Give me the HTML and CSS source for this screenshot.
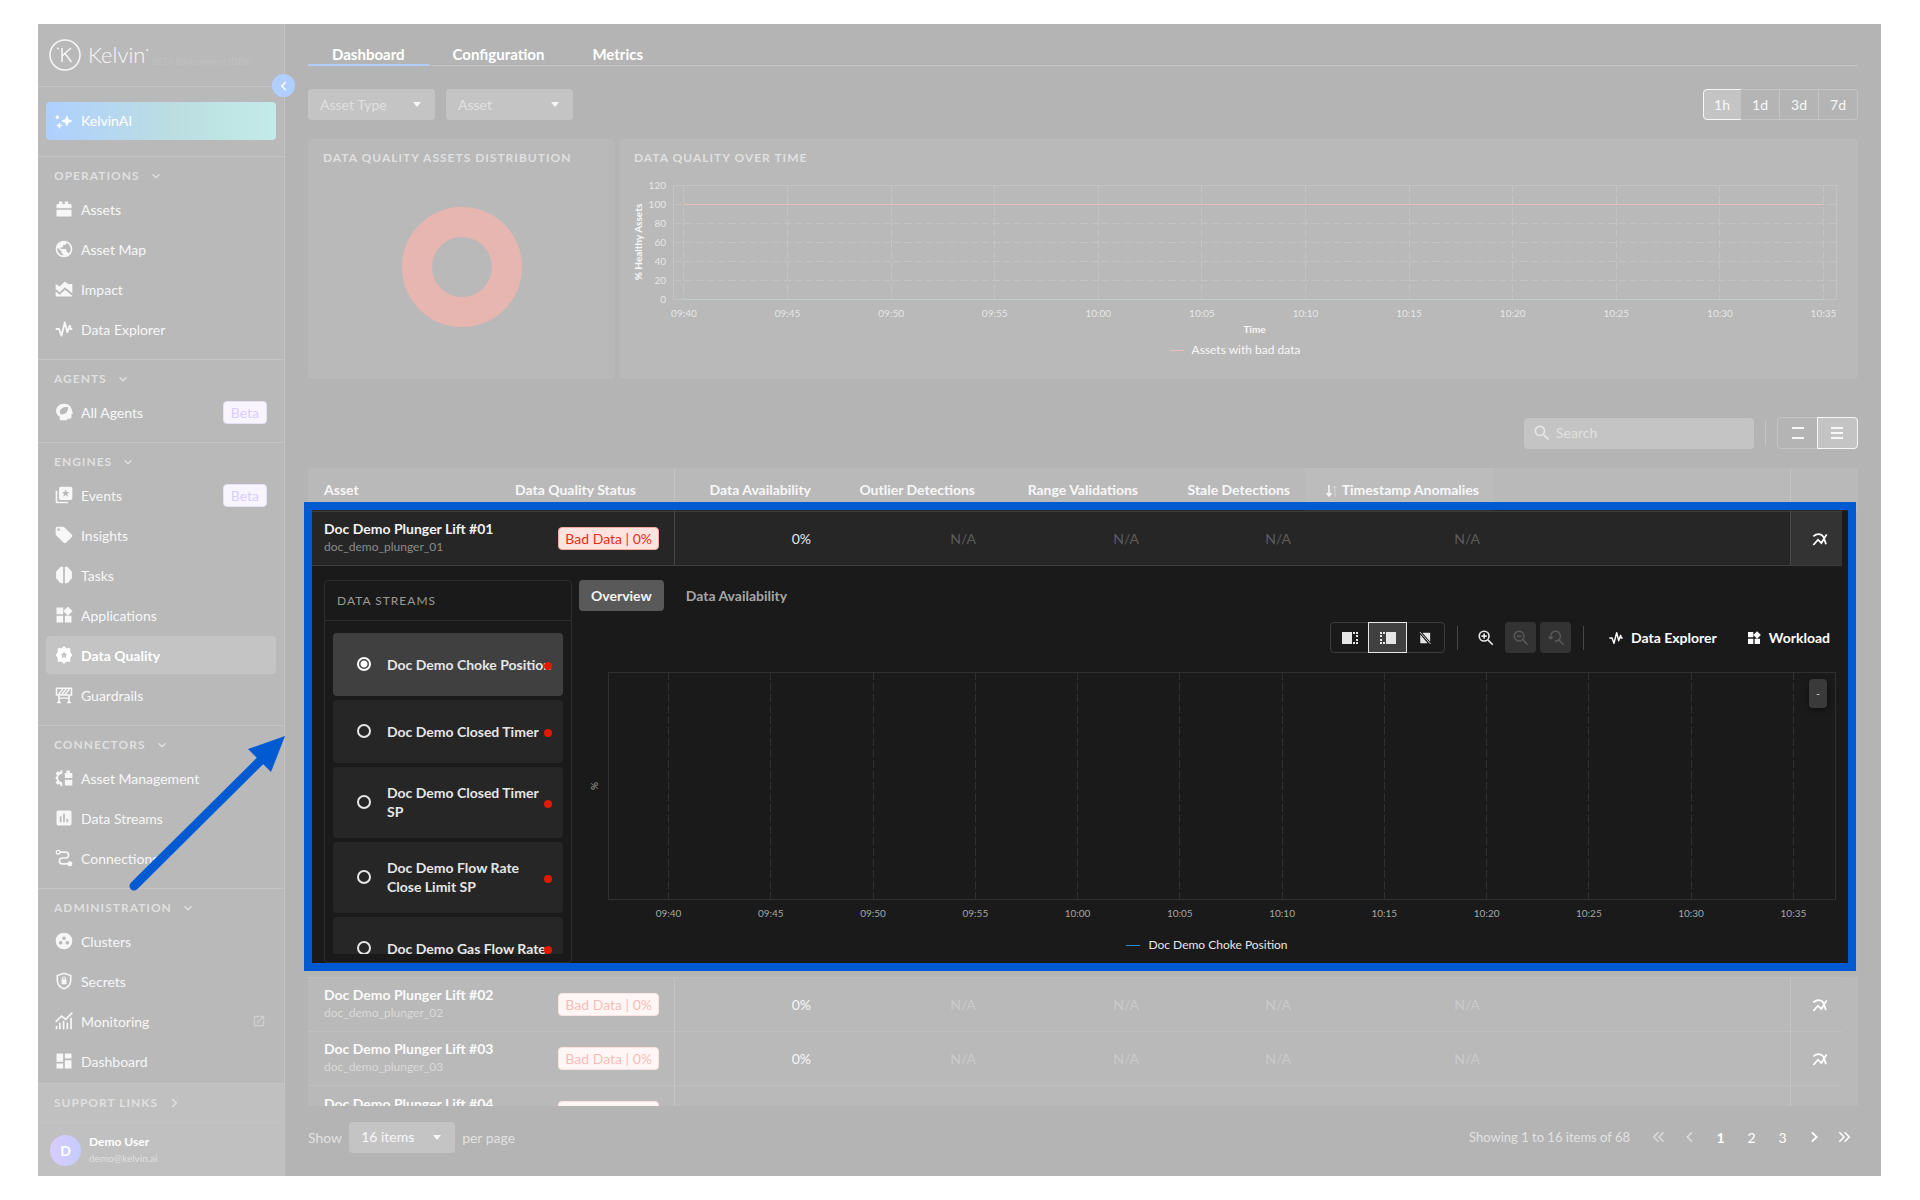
FILE: index.html
```html
<!DOCTYPE html>
<html lang="en">

<head>
    <meta charset="UTF-8">
    <meta name="viewport" content="width=device-width, initial-scale=1.0">
    <title>Kelvin - Data Quality</title>
    <link rel="stylesheet" href="styles.css">
</head>

<body>
    <!-- Icon set -->
    <svg class="sprite" aria-hidden="true">
        <symbol id="i-spark" viewBox="0 0 24 24"><path d="M15.5 5l2 5 5 2-5 2-2 5-2-5-5-2 5-2zM6.5 13.5l1.2 2.8 2.8 1.2-2.8 1.2-1.2 2.8-1.2-2.8-2.8-1.2 2.8-1.2z"/><circle cx="4" cy="7.5" r="2"/></symbol>
        <symbol id="i-assets" viewBox="0 0 24 24"><path d="M3 13h18v7a1 1 0 0 1-1 1H4a1 1 0 0 1-1-1zM4 6h2V3h4v3h3V3h4v3h3a1 1 0 0 1 1 1v4H3V7a1 1 0 0 1 1-1z"/></symbol>
        <symbol id="i-globe" viewBox="0 0 24 24"><path d="M12 2C6.48 2 2 6.48 2 12s4.48 10 10 10 10-4.48 10-10S17.52 2 12 2zm-1 17.93c-3.95-.49-7-3.85-7-7.93 0-.62.08-1.21.21-1.79L9 15v1c0 1.1.9 2 2 2v1.93zm6.9-2.54c-.26-.81-1-1.39-1.9-1.39h-1v-3c0-.55-.45-1-1-1H8v-2h2c.55 0 1-.45 1-1V7h2c1.1 0 2-.9 2-2v-.41c2.93 1.19 5 4.06 5 7.41 0 2.08-.8 3.97-2.1 5.39z"/></symbol>
        <symbol id="i-impact" viewBox="0 0 24 24"><path d="M2 6l5 3 6-6 4 3h5v11l-9-7-6 6-5-4z"/><path d="M2 15l5 4 6-6 9 7v1H2z"/></symbol>
        <symbol id="i-pulse" viewBox="0 0 24 24"><path d="M2 12h4l3 8 4-16 3 12 3-8 1 4h2" fill="none" stroke="currentColor" stroke-width="2.2" stroke-linejoin="round"/></symbol>
        <symbol id="i-agent" viewBox="0 0 24 24"><path fill-rule="evenodd" d="M12 2c5.5 0 9 3.5 9.5 8l1 3.5c0 .8-.5 1-1.5 1V18c0 1.2-.8 2-2 2h-3v2H7v-4.3C4 16 2.5 13.5 2.5 11 2.5 6 6.500 2 12 2zm5 4c-6-.5-10 2-10 6l1 3 1.5-.2C14 14.5 17 12 17 6z"/></symbol>
        <symbol id="i-events" viewBox="0 0 24 24"><path d="M2 7h2v13h13v2H4a2 2 0 0 1-2-2z"/><path fill-rule="evenodd" d="M8 2h12a2 2 0 0 1 2 2v12a2 2 0 0 1-2 2H8a2 2 0 0 1-2-2V4a2 2 0 0 1 2-2zm6 3l-1.3 3.5H9.5l2.5 2-1 3.500 3-2 3 2-1-3.5 2.5-2h-3.2z"/></symbol>
        <symbol id="i-tag" viewBox="0 0 24 24"><path d="M21.41 11.58l-9-9C12.05 2.22 11.55 2 11 2H4c-1.1 0-2 .9-2 2v7c0 .55.22 1.05.59 1.42l9 9c.36.36.86.58 1.41.58s1.05-.22 1.41-.59l7-7c.37-.36.59-.86.59-1.41s-.23-1.06-.59-1.42zM5.5 7C4.67 7 4 6.33 4 5.5S4.67 4 5.5 4 7 4.67 7 5.5 6.33 7 5.5 7z"/></symbol>
        <symbol id="i-tasks" viewBox="0 0 24 24"><path d="M11 2v20H8l-5.5-6V8L8 2zM13 2h3l5.5 6v8L16 22h-3z"/></symbol>
        <symbol id="i-apps" viewBox="0 0 24 24"><path d="M13 13v8h8v-8h-8zM3 21h8v-8H3v8zM3 3v8h8V3H3zm13.66-1.31L11 7.34 16.66 13l5.66-5.66-5.66-5.65z"/></symbol>
        <symbol id="i-quality" viewBox="0 0 24 24"><path fill-rule="evenodd" d="M12 1.5L15 4h4.5v4.5L22 12l-2.5 3.5V20H15l-3 2.5L9 20H4.5v-4.5L2 12l2.5-3.5V4H9zM12 7l-1.2 3.6H7.5l2.6 2.1-1 3.6 2.9-2.1 2.9 2.1-1-3.6 2.6-2.1h-3.3z"/></symbol>
        <symbol id="i-guard" viewBox="0 0 24 24"><path d="M3 4h18v8H3zM5 12l6-8M9 12l6-8M13 12l6-8" fill="none" stroke="currentColor" stroke-width="1.8"/><path d="M5 13h2v7h1.5v2h-5v-2H5zM17 13h2v7h1.500v2h-5v-2H17zM7 15h10v1.5H7z"/></symbol>
        <symbol id="i-manage" viewBox="0 0 24 24"><path d="M10 2v5a5 5 0 0 0 0 10v5H8l-1-3-3 1-2-3 2-2-2-2v-2l2-2-2-2 2-3 3 1 1-2zM13 14h9v7h-9zM13 6h2V3h4v3h3v6h-9z"/></symbol>
        <symbol id="i-streams" viewBox="0 0 24 24"><path d="M19 3H5c-1.1 0-2 .9-2 2v14c0 1.1.9 2 2 2h14c1.1 0 2-.9 2-2V5c0-1.1-.9-2-2-2zM9 17H7v-7h2v7zm4 0h-2V7h2v10zm4 0h-2v-4h2v4z"/></symbol>
        <symbol id="i-route" viewBox="0 0 24 24"><path d="M7 5h7a3.5 3.5 0 0 1 0 7h-4a3.5 3.5 0 0 0 0 7h7" fill="none" stroke="currentColor" stroke-width="2"/><circle cx="5" cy="5" r="2.2" fill="none" stroke="currentColor" stroke-width="1.6"/><circle cx="19" cy="19" r="3"/></symbol>
        <symbol id="i-clusters" viewBox="0 0 24 24"><path fill-rule="evenodd" d="M12 2a10 10 0 1 0 0 20 10 10 0 0 0 0-20zm0 4.5a2.2 2.2 0 1 1 0 4.4 2.2 2.2 0 0 1 0-4.4zM8 12a2.2 2.2 0 1 1 0 4.4A2.2 2.2 0 0 1 8 12zm8 0a2.2 2.2 0 1 1 0 4.4 2.2 2.2 0 0 1 0-4.4z"/></symbol>
        <symbol id="i-shield" viewBox="0 0 24 24"><path d="M12 2.8l8 2.7V11c0 4.5-3 8.5-8 10.2C7 19.5 4 15.5 4 11V5.5z" fill="none" stroke="currentColor" stroke-width="2"/><path fill-rule="evenodd" d="M9.5 10V9a2.5 2.5 0 0 1 5 0v1h.5v6H9v-6zm1.3 0h2.4V9a1.2 1.2 0 0 0-2.4 0z"/></symbol>
        <symbol id="i-monitor" viewBox="0 0 24 24"><path d="M2 13l7-7 5 4 8-8" fill="none" stroke="currentColor" stroke-width="2"/><path d="M2 18h2v4H2zM6 14h2v8H6zM10.5 12h2v10h-2zM15 14h2v8h-2zM19.5 8h2v14h-2z"/></symbol>
        <symbol id="i-dash" viewBox="0 0 24 24"><path d="M3 13h8V3H3v10zm0 8h8v-6H3v6zm10 0h8V11h-8v10zm0-18v6h8V3h-8z"/></symbol>
        <symbol id="i-open" viewBox="0 0 24 24"><path d="M19 19H5V5h7V3H5a2 2 0 0 0-2 2v14a2 2 0 0 0 2 2h14c1.1 0 2-.9 2-2v-7h-2v7zM14 3v2h3.59l-9.83 9.83 1.41 1.41L19 6.41V10h2V3h-7z"/></symbol>
        <symbol id="i-down" viewBox="0 0 24 24"><path d="M5 8.5l7 7 7-7" fill="none" stroke="currentColor" stroke-width="3"/></symbol>
        <symbol id="i-right" viewBox="0 0 24 24"><path d="M8.5 4l8 8-8 8" fill="none" stroke="currentColor" stroke-width="3"/></symbol>
        <symbol id="i-left" viewBox="0 0 24 24"><path d="M15.5 4l-8 8 8 8" fill="none" stroke="currentColor" stroke-width="3"/></symbol>
        <symbol id="i-first" viewBox="0 0 24 24"><path d="M11 4l-8 8 8 8M20 4l-8 8 8 8" fill="none" stroke="currentColor" stroke-width="2.6"/></symbol>
        <symbol id="i-last" viewBox="0 0 24 24"><path d="M4 4l8 8-8 8M13 4l8 8-8 8" fill="none" stroke="currentColor" stroke-width="2.6"/></symbol>
        <symbol id="i-caret" viewBox="0 0 10 6"><path d="M1 0h8L5 5z"/></symbol>
        <symbol id="i-search" viewBox="0 0 24 24"><path d="M15.5 14h-.79l-.28-.27A6.471 6.471 0 0 0 16 9.5 6.5 6.5 0 1 0 9.5 16c1.61 0 3.09-.59 4.23-1.57l.27.28v.79l5 4.99L20.49 19l-4.99-5zm-6 0C7.01 14 5 11.99 5 9.5S7.01 5 9.5 5 14 7.01 14 9.5 11.99 14 9.5 14z"/></symbol>
        <symbol id="i-zoomin" viewBox="0 0 24 24"><path d="M14.5 14.5L21 21M9.5 6v7M6 9.5h7" stroke="currentColor" stroke-width="2.2"/><circle cx="9.5" cy="9.5" r="6.5" fill="none" stroke="currentColor" stroke-width="2.2"/></symbol>
        <symbol id="i-zoomout" viewBox="0 0 24 24"><path d="M14.5 14.5L21 21M6.500 9.5h6" stroke="currentColor" stroke-width="2"/><circle cx="9.5" cy="9.5" r="6.5" fill="none" stroke="currentColor" stroke-width="2"/></symbol>
        <symbol id="i-zoomreset" viewBox="0 0 24 24"><path d="M15.5 14.5L22 21M5 11a6.5 6.5 0 1 1 5.5 5" fill="none" stroke="currentColor" stroke-width="2"/><path d="M1 10h8l-4 4.5z"/></symbol>
        <symbol id="i-multi" viewBox="0 0 24 24"><path d="M2 21l7-8 5 5 8-13M2 8c6-5 15-5 17 6l2 6" fill="none" stroke="currentColor" stroke-width="2.6"/></symbol>
        <symbol id="i-sort" viewBox="0 0 12 14"><path d="M3 1v10M.5 9L3 12l2.5-3" fill="none" stroke="currentColor" stroke-width="1.5"/><path d="M9 13V3M7 4.5L9 2l2 2.5" fill="none" stroke="currentColor" opacity=".4"/></symbol>
        <symbol id="i-solid-left" viewBox="0 0 16 12"><path d="M0 0h10v12H0zM11 0h2v2h-2zM14 0h2v2h-2zM14 3h2v2h-2zM14 7h2v2h-2zM14 10h2v2h-2zM11 10h2v2h-2z"/></symbol>
        <symbol id="i-solid-right" viewBox="0 0 16 12"><path d="M6 0h10v12H6zM0 0h2v2H0zM3 0h2v2H3zM0 3h2v2H0zM0 7h2v2H0zM0 10h2v2H0zM3 10h2v2H3z"/></symbol>
        <symbol id="i-none" viewBox="0 0 14 14"><path d="M4 1h9v10.500zM1.500 3L10 13H1.500z"/><path d="M1 0l12.500 14" stroke="currentColor"/></symbol>
    </svg>

    <div class="app">
        <aside class="sidebar">
            <div class="brand">
                <svg class="brand-mark" viewBox="0 0 32 32" aria-hidden="true">
                    <circle cx="16" cy="16" r="15" fill="none" stroke="currentColor" stroke-width="1.5"/>
                    <path d="M13 9v14M22 9l-9 8M16 14.5l6.5 8.5" fill="none" stroke="currentColor" stroke-width="1.5"/>
                    <circle cx="9" cy="9.5" r="1"/>
                </svg>
                <span class="brand-name">Kelvin<sup>•</sup></span>
                <span class="brand-env">BETA Environment (DEV)</span>
                <button class="collapse" type="button" aria-label="Collapse menu"><svg><use href="#i-left"/></svg></button>
            </div>

            <div class="ai">
                <a class="nav-link ai-link" href="#"><svg><use href="#i-spark"/></svg>KelvinAI</a>
            </div>

            <nav class="menu">
                <section class="group">
                    <h2>Operations <svg><use href="#i-down"/></svg></h2>
                    <a class="nav-link" href="#"><svg><use href="#i-assets"/></svg>Assets</a>
                    <a class="nav-link" href="#"><svg><use href="#i-globe"/></svg>Asset Map</a>
                    <a class="nav-link" href="#"><svg><use href="#i-impact"/></svg>Impact</a>
                    <a class="nav-link" href="#"><svg><use href="#i-pulse"/></svg>Data Explorer</a>
                </section>
                <section class="group">
                    <h2>Agents <svg><use href="#i-down"/></svg></h2>
                    <a class="nav-link" href="#"><svg><use href="#i-agent"/></svg>All Agents <span class="beta">Beta</span></a>
                </section>
                <section class="group">
                    <h2>Engines <svg><use href="#i-down"/></svg></h2>
                    <a class="nav-link" href="#"><svg><use href="#i-events"/></svg>Events <span class="beta">Beta</span></a>
                    <a class="nav-link" href="#"><svg><use href="#i-tag"/></svg>Insights</a>
                    <a class="nav-link" href="#"><svg><use href="#i-tasks"/></svg>Tasks</a>
                    <a class="nav-link" href="#"><svg><use href="#i-apps"/></svg>Applications</a>
                    <a class="nav-link active" href="#"><svg><use href="#i-quality"/></svg>Data Quality</a>
                    <a class="nav-link" href="#"><svg><use href="#i-guard"/></svg>Guardrails</a>
                </section>
                <section class="group">
                    <h2>Connectors <svg><use href="#i-down"/></svg></h2>
                    <a class="nav-link" href="#"><svg><use href="#i-manage"/></svg>Asset Management</a>
                    <a class="nav-link" href="#"><svg><use href="#i-streams"/></svg>Data Streams</a>
                    <a class="nav-link" href="#"><svg><use href="#i-route"/></svg>Connections</a>
                </section>
                <section class="group">
                    <h2>Administration <svg><use href="#i-down"/></svg></h2>
                    <a class="nav-link" href="#"><svg><use href="#i-clusters"/></svg>Clusters</a>
                    <a class="nav-link" href="#"><svg><use href="#i-shield"/></svg>Secrets</a>
                    <a class="nav-link" href="#"><svg><use href="#i-monitor"/></svg>Monitoring <svg class="external"><use href="#i-open"/></svg></a>
                    <a class="nav-link" href="#"><svg><use href="#i-dash"/></svg>Dashboard</a>
                </section>
            </nav>

            <div class="sidebar-foot">
                <h2>Support Links <svg><use href="#i-right"/></svg></h2>
                <div class="user">
                    <span class="avatar">D</span>
                    <div>
                        <div class="user-name">Demo User</div>
                        <div class="user-mail">demo@kelvin.ai</div>
                    </div>
                </div>
            </div>
        </aside>

        <main class="main">
            <nav class="tabs">
                <a class="tab selected" href="#">Dashboard</a>
                <a class="tab" href="#">Configuration</a>
                <a class="tab" href="#">Metrics</a>
            </nav>

            <div class="filters">
                <div class="select">
                    <select aria-label="Asset Type"><option>Asset Type</option></select>
                    <svg><use href="#i-caret"/></svg>
                </div>
                <div class="select">
                    <select aria-label="Asset"><option>Asset</option></select>
                    <svg><use href="#i-caret"/></svg>
                </div>
                <div class="segmented range">
                    <button class="on" type="button">1h</button>
                    <button type="button">1d</button>
                    <button type="button">3d</button>
                    <button type="button">7d</button>
                </div>
            </div>

            <div class="cards">
                <section class="card card-assets">
                    <h3>Data Quality Assets Distribution</h3>
                    <svg class="donut" viewBox="0 0 122 122" aria-label="All assets have bad data">
                        <circle cx="61" cy="61" r="45" fill="none" stroke-width="30"/>
                    </svg>
                </section>
                <section class="card">
                    <h3>Data Quality Over Time</h3>
                    <svg class="plot plot-health">
                        <g class="grid">
                            <rect width="100%" height="114"/>
                            <g class="dash">
                                <line x2="100%" y1="19" y2="19"/>
                                <line x2="100%" y1="38" y2="38"/>
                                <line x2="100%" y1="57" y2="57"/>
                                <line x2="100%" y1="76" y2="76"/>
                                <line x2="100%" y1="95" y2="95"/>
                                <line x1="0.94%" x2="0.94%" y2="114"/>
                                <line x1="9.85%" x2="9.85%" y2="114"/>
                                <line x1="18.76%" x2="18.76%" y2="114"/>
                                <line x1="27.66%" x2="27.66%" y2="114"/>
                                <line x1="36.57%" x2="36.57%" y2="114"/>
                                <line x1="45.48%" x2="45.48%" y2="114"/>
                                <line x1="54.39%" x2="54.39%" y2="114"/>
                                <line x1="63.29%" x2="63.29%" y2="114"/>
                                <line x1="72.2%" x2="72.2%" y2="114"/>
                                <line x1="81.11%" x2="81.11%" y2="114"/>
                                <line x1="90.02%" x2="90.02%" y2="114"/>
                                <line x1="98.92%" x2="98.92%" y2="114"/>
                            </g>
                        </g>
                        <line class="series-bad" x1="0.94%" x2="98.92%" y1="19" y2="19"/>
                        <line class="series-good" x1="0.94%" x2="98.92%" y1="114" y2="114"/>
                        <g class="y-labels">
                            <text x="-7" y="4">120</text>
                            <text x="-7" y="23">100</text>
                            <text x="-7" y="42">80</text>
                            <text x="-7" y="61">60</text>
                            <text x="-7" y="80">40</text>
                            <text x="-7" y="99">20</text>
                            <text x="-7" y="118">0</text>
                        </g>
                        <g class="x-labels">
                            <text x="0.94%" y="132">09:40</text>
                            <text x="9.85%" y="132">09:45</text>
                            <text x="18.76%" y="132">09:50</text>
                            <text x="27.66%" y="132">09:55</text>
                            <text x="36.57%" y="132">10:00</text>
                            <text x="45.48%" y="132">10:05</text>
                            <text x="54.39%" y="132">10:10</text>
                            <text x="63.29%" y="132">10:15</text>
                            <text x="72.2%" y="132">10:20</text>
                            <text x="81.11%" y="132">10:25</text>
                            <text x="90.02%" y="132">10:30</text>
                            <text x="98.92%" y="132">10:35</text>
                        </g>
                        <text class="axis-title" x="50%" y="148">Time</text>
                        <text class="axis-title" transform="translate(-31 57) rotate(-90)">% Healthy Assets</text>
                    </svg>
                    <div class="legend"><span class="key bad"></span>Assets with bad data</div>
                </section>
            </div>

            <div class="tools">
                <label class="search">
                    <svg><use href="#i-search"/></svg>
                    <input type="text" placeholder="Search" aria-label="Search">
                </label>
                <span class="divider"></span>
                <div class="segmented density">
                    <button type="button" aria-label="Comfortable rows"><svg viewBox="0 0 12 12"><path d="M0 0h12v2H0zM0 10h12v2H0z"/></svg></button>
                    <button class="on" type="button" aria-label="Compact rows"><svg viewBox="0 0 12 12"><path d="M0 0h12v2H0zM0 5h12v2H0zM0 10h12v2H0z"/></svg></button>
                </div>
            </div>

            <div class="grid-area">
                <div class="grid-scroll">
                    <table class="assets">
                        <colgroup>
                            <col class="c-asset"><col class="c-status"><col class="c-avail"><col class="c-outlier">
                            <col class="c-range"><col class="c-stale"><col class="c-time"><col><col class="c-action">
                        </colgroup>
                        <thead>
                            <tr>
                                <th class="left">Asset</th>
                                <th class="status">Data Quality Status</th>
                                <th class="line">Data Availability</th>
                                <th>Outlier Detections</th>
                                <th>Range Validations</th>
                                <th>Stale Detections</th>
                                <th class="sorted"><svg><use href="#i-sort"/></svg>Timestamp Anomalies</th>
                                <th></th>
                                <th class="line"></th>
                            </tr>
                        </thead>
                        <tbody>
                            <tr class="row open">
                                <td class="left"><div class="asset-name">Doc Demo Plunger Lift #01</div><div class="asset-id">doc_demo_plunger_01</div></td>
                                <td><span class="badge">Bad Data | 0%</span></td>
                                <td class="line">0%</td>
                                <td class="na">N/A</td>
                                <td class="na">N/A</td>
                                <td class="na">N/A</td>
                                <td class="na">N/A</td>
                                <td></td>
                                <td class="line action"><button type="button" aria-label="Hide charts"><svg><use href="#i-multi"/></svg></button></td>
                            </tr>
                            <tr class="detail">
                                <td colspan="9">
                                    <div class="detail-body">
                                        <section class="streams">
                                            <h4>Data Streams</h4>
                                            <div class="stream-list">
                                                <label class="stream checked"><input type="radio" name="stream" checked><span>Doc Demo Choke Position</span><i class="dot"></i></label>
                                                <label class="stream"><input type="radio" name="stream"><span>Doc Demo Closed Timer</span><i class="dot"></i></label>
                                                <label class="stream"><input type="radio" name="stream"><span>Doc Demo Closed Timer SP</span><i class="dot"></i></label>
                                                <label class="stream"><input type="radio" name="stream"><span>Doc Demo Flow Rate Close Limit SP</span><i class="dot"></i></label>
                                                <label class="stream"><input type="radio" name="stream"><span>Doc Demo Gas Flow Rate</span><i class="dot"></i></label>
                                            </div>
                                        </section>
                                        <section class="stream-view">
                                            <div class="view-tabs">
                                                <button class="on" type="button">Overview</button>
                                                <button type="button">Data Availability</button>
                                            </div>
                                            <div class="chart-tools">
                                                <div class="segmented modes">
                                                    <button type="button" aria-label="Left"><svg><use href="#i-solid-left"/></svg></button>
                                                    <button class="on" type="button" aria-label="Right"><svg><use href="#i-solid-right"/></svg></button>
                                                    <button type="button" aria-label="None"><svg><use href="#i-none"/></svg></button>
                                                </div>
                                                <span class="divider"></span>
                                                <div class="zooms">
                                                    <button type="button" aria-label="Zoom in"><svg><use href="#i-zoomin"/></svg></button>
                                                    <button type="button" aria-label="Zoom out" disabled><svg><use href="#i-zoomout"/></svg></button>
                                                    <button type="button" aria-label="Reset zoom" disabled><svg><use href="#i-zoomreset"/></svg></button>
                                                </div>
                                                <span class="divider"></span>
                                                <a class="tool-link" href="#"><svg><use href="#i-pulse"/></svg>Data Explorer</a>
                                                <a class="tool-link" href="#"><svg><use href="#i-apps"/></svg>Workload</a>
                                            </div>
                                            <div class="stream-chart">
                                                <svg class="plot plot-stream">
                                                    <g class="grid">
                                                        <rect width="100%" height="227"/>
                                                        <g class="dash">
                                                            <line x1="4.93%" x2="4.93%" y2="227"/>
                                                            <line x1="13.27%" x2="13.27%" y2="227"/>
                                                            <line x1="21.6%" x2="21.6%" y2="227"/>
                                                            <line x1="29.94%" x2="29.94%" y2="227"/>
                                                            <line x1="38.27%" x2="38.27%" y2="227"/>
                                                            <line x1="46.6%" x2="46.6%" y2="227"/>
                                                            <line x1="54.94%" x2="54.94%" y2="227"/>
                                                            <line x1="63.27%" x2="63.27%" y2="227"/>
                                                            <line x1="71.61%" x2="71.61%" y2="227"/>
                                                            <line x1="79.94%" x2="79.94%" y2="227"/>
                                                            <line x1="88.27%" x2="88.27%" y2="227"/>
                                                            <line x1="96.61%" x2="96.61%" y2="227"/>
                                                        </g>
                                                    </g>
                                                    <g class="x-labels">
                                                        <text x="4.93%" y="245">09:40</text>
                                                        <text x="13.27%" y="245">09:45</text>
                                                        <text x="21.6%" y="245">09:50</text>
                                                        <text x="29.94%" y="245">09:55</text>
                                                        <text x="38.27%" y="245">10:00</text>
                                                        <text x="46.6%" y="245">10:05</text>
                                                        <text x="54.94%" y="245">10:10</text>
                                                        <text x="63.27%" y="245">10:15</text>
                                                        <text x="71.61%" y="245">10:20</text>
                                                        <text x="79.94%" y="245">10:25</text>
                                                        <text x="88.27%" y="245">10:30</text>
                                                        <text x="96.61%" y="245">10:35</text>
                                                    </g>
                                                    <text class="unit" transform="translate(-10 118) rotate(-90)">%</text>
                                                </svg>
                                                <span class="chart-value">-</span>
                                            </div>
                                            <div class="legend"><span class="key stream-key"></span>Doc Demo Choke Position</div>
                                        </section>
                                    </div>
                                </td>
                            </tr>
                            <tr class="row">
                                <td class="left"><div class="asset-name">Doc Demo Plunger Lift #02</div><div class="asset-id">doc_demo_plunger_02</div></td>
                                <td><span class="badge">Bad Data | 0%</span></td>
                                <td class="line">0%</td>
                                <td class="na">N/A</td>
                                <td class="na">N/A</td>
                                <td class="na">N/A</td>
                                <td class="na">N/A</td>
                                <td></td>
                                <td class="line action"><button type="button" aria-label="Show charts"><svg><use href="#i-multi"/></svg></button></td>
                            </tr>
                            <tr class="row">
                                <td class="left"><div class="asset-name">Doc Demo Plunger Lift #03</div><div class="asset-id">doc_demo_plunger_03</div></td>
                                <td><span class="badge">Bad Data | 0%</span></td>
                                <td class="line">0%</td>
                                <td class="na">N/A</td>
                                <td class="na">N/A</td>
                                <td class="na">N/A</td>
                                <td class="na">N/A</td>
                                <td></td>
                                <td class="line action"><button type="button" aria-label="Show charts"><svg><use href="#i-multi"/></svg></button></td>
                            </tr>
                            <tr class="row">
                                <td class="left"><div class="asset-name">Doc Demo Plunger Lift #04</div></td>
                                <td><span class="badge">Bad Data | 0%</span></td>
                                <td class="line"></td>
                                <td></td>
                                <td></td>
                                <td></td>
                                <td></td>
                                <td></td>
                                <td class="line"></td>
                            </tr>
                        </tbody>
                    </table>
                </div>
                <!-- Highlight: frames the open row and washes out everything else -->
                <div class="spotlight"></div>
            </div>

            <footer class="pager">
                <label for="pageSize">Show</label>
                <div class="select page-size">
                    <select id="pageSize"><option>16 items</option></select>
                    <svg><use href="#i-caret"/></svg>
                </div>
                <span>per page</span>
                <span class="summary">Showing 1 to 16 items of 68</span>
                <div class="pages">
                    <button type="button" aria-label="First page" disabled><svg><use href="#i-first"/></svg></button>
                    <button type="button" aria-label="Previous page" disabled><svg><use href="#i-left"/></svg></button>
                    <button class="current" type="button">1</button>
                    <button type="button">2</button>
                    <button type="button">3</button>
                    <button type="button" aria-label="Next page"><svg><use href="#i-right"/></svg></button>
                    <button type="button" aria-label="Last page"><svg><use href="#i-last"/></svg></button>
                </div>
            </footer>
        </main>

        <!-- Arrow that points at the highlight -->
        <svg class="arrow" viewBox="0 0 160 162" aria-hidden="true">
            <path d="M8 154L136 27" stroke="currentColor" stroke-width="9" stroke-linecap="round"/>
            <path d="M159 4l-14 36-23-23z"/>
        </svg>
    </div>
</body>

</html>
```

FILE: styles.css
```css
* {
    box-sizing: border-box;
}

body {
    margin: 0;
    padding: 24px 39px 24px 38px;
    background-color: #fff;
    color: #e6e6e6;
    font-family: Lato, "Open Sans", sans-serif;
    font-size: 14px;
}

h2, h3, h4 {
    margin: 0;
}

a {
    color: inherit;
    text-decoration: none;
}

button, input, select {
    font: inherit;
    color: inherit;
    border: none;
    background: none;
    padding: 0;
    margin: 0;
}

svg {
    fill: currentColor;
    flex: none;
}

.sprite {
    position: absolute;
    width: 0;
    height: 0;
}

.app {
    position: relative;
    display: flex;
    height: calc(100vh - 48px);
    overflow: hidden;
    background-color: #181818;
}

/* Sidebar */
.sidebar {
    display: flex;
    flex-direction: column;
    width: 247px;
    flex: none;
    background-color: #262626;
    border-right: 1px solid #474747;
}

.brand {
    position: relative;
    display: flex;
    align-items: center;
    height: 62px;
    padding-left: 11px;
    flex: none;
}

.brand-mark {
    width: 32px;
    height: 32px;
}

.brand-name {
    margin-left: 7px;
    font-size: 22px;
    font-weight: 300;
    line-height: 32px;
}

.brand-name sup {
    font-size: 6px;
    line-height: 6px;
    vertical-align: 11px;
}

.brand-env {
    margin-left: 3px;
    padding-top: 12px;
    font-size: 9px;
    color: #404040;
    white-space: nowrap;
}

.collapse {
    position: absolute;
    right: -11px;
    bottom: -11px;
    display: flex;
    align-items: center;
    justify-content: center;
    width: 23px;
    height: 23px;
    border-radius: 50%;
    background-color: #0b6bff;
    color: #fff;
}

.collapse svg {
    width: 12px;
    height: 12px;
}

.ai {
    padding: 15px 8px 16px;
    border-top: 1px solid #474747;
}

.nav-link {
    display: flex;
    align-items: center;
    height: 38px;
    margin-bottom: 2px;
    padding: 0 9px 0 8px;
    border-radius: 4px;
}

.nav-link svg {
    width: 20px;
    height: 20px;
    margin-right: 7px;
}

.nav-link.active {
    background-color: #474747;
    color: #fff;
    font-weight: 700;
}

.ai-link {
    margin-bottom: 0;
    padding-bottom: 1px;
    background: linear-gradient(90deg, #086dff, #2e98a0 55%, #44c0b7);
    color: #fff;
}

.nav-link .external {
    width: 14px;
    height: 14px;
    margin: 0 1px 0 auto;
    color: #707070;
}

.menu {
    flex: 1;
    min-height: 0;
    overflow: hidden;
}

.group {
    padding: 4px 8px 9px;
    border-top: 1px solid #474747;
}

.sidebar h2 {
    display: flex;
    align-items: center;
    gap: 10px;
    height: 29px;
    padding-left: 8px;
    font-size: 12px;
    font-weight: 700;
    letter-spacing: 1px;
    text-transform: uppercase;
    color: #a0a0a0;
}

.sidebar h2 svg {
    width: 12px;
    height: 12px;
}

.beta {
    margin-left: auto;
    padding: 0 7px;
    border: 1px solid #b3a1e6;
    border-radius: 4px;
    background-color: #e9e0ff;
    color: #8860ff;
    line-height: 21px;
}

.sidebar-foot {
    flex: none;
    border-top: 1px solid #474747;
    background-color: #3b3b3b;
}

.sidebar-foot h2 {
    height: 38px;
    padding: 0 0 1px 16px;
}

.user {
    display: flex;
    align-items: center;
    gap: 8px;
    height: 54px;
    padding: 1px 0 0 12px;
    border-top: 1px solid #474747;
}

.avatar {
    width: 31px;
    height: 31px;
    border-radius: 50%;
    background: linear-gradient(90deg, #8860ff, #4a60ff);
    color: #fff;
    font-weight: 700;
    line-height: 31px;
    text-align: center;
}

.user-name {
    color: #fff;
    font-size: 12px;
    font-weight: 700;
    line-height: 16px;
}

.user-mail {
    color: #a0a0a0;
    font-size: 10px;
    line-height: 16px;
}

/* Main column */
.main {
    display: flex;
    flex-direction: column;
    flex: 1;
    min-width: 0;
    padding: 0 23px;
}

.tabs {
    display: flex;
    height: 42px;
    flex: none;
    padding-top: 19px;
    border-bottom: 1px solid #474747;
    color: #fff;
    font-size: 15px;
    font-weight: 700;
    line-height: 22px;
}

.tab {
    height: 23px;
    padding: 0 24px;
}

.tab.selected {
    border-bottom: 2px solid #0b6bff;
}

.filters {
    display: flex;
    gap: 11px;
    margin-top: 23px;
}

.select {
    position: relative;
    width: 127px;
    height: 31px;
    border-radius: 4px;
    background-color: #4a4a4a;
    color: #a0a0a0;
}

.select select {
    width: 100%;
    height: 31px;
    padding: 0 12px 1px;
    appearance: none;
}

.select svg {
    position: absolute;
    top: 13px;
    right: 13px;
    width: 10px;
    height: 6px;
    color: #e6e6e6;
    pointer-events: none;
}

.segmented {
    display: flex;
    border: 1px solid #474747;
    border-radius: 4px;
}

.segmented button {
    display: flex;
    align-items: center;
    justify-content: center;
    border-left: 1px solid #474747;
}

.segmented button:first-child {
    border-left: none;
}

.segmented .on {
    margin: -1px;
    border: 1px solid #e6e6e6;
    background-color: #4a4a4a;
}

.segmented .on:first-child {
    border: 1px solid #e6e6e6;
    border-radius: 4px 0 0 4px;
}

.segmented .on:last-child {
    border-radius: 0 4px 4px 0;
}

.range {
    width: 155px;
    height: 31px;
    margin-left: auto;
}

.range button {
    flex: 1;
    padding-bottom: 1px;
}

.range .on {
    flex: none;
    width: 38px;
}

.cards {
    display: grid;
    grid-template-columns: 307px 1fr;
    gap: 4px;
    margin-top: 19px;
}

.card {
    height: 240px;
    padding: 9px 22px 0 15px;
    border-radius: 4px;
    background-color: #262626;
}

.card-assets {
    padding-right: 15px;
}

.card h3 {
    color: #a0a0a0;
    font-size: 12px;
    font-weight: 700;
    letter-spacing: 1px;
    line-height: 20px;
    text-transform: uppercase;
    white-space: nowrap;
}

.donut {
    display: block;
    width: 122px;
    height: 122px;
    margin: 38px auto 0;
    stroke: #b91d0a;
}

.plot {
    display: block;
    overflow: visible;
    font-size: 10px;
}

.plot-health {
    width: calc(100% - 39px);
    height: 115px;
    margin: 17px 0 40px 39px;
}

.grid rect,
.grid line {
    fill: none;
    stroke: #454545;
    shape-rendering: crispEdges;
}

.dash {
    stroke-dasharray: 8 3;
}

.series-bad {
    stroke: #c0341c;
    shape-rendering: crispEdges;
}

.series-good {
    stroke: #2f6a60;
    shape-rendering: crispEdges;
}

.y-labels {
    fill: #b8b8b8;
    text-anchor: end;
}

.x-labels {
    fill: #b8b8b8;
    text-anchor: middle;
}

.axis-title {
    fill: #e6e6e6;
    font-weight: 700;
    text-anchor: middle;
}

.legend {
    display: flex;
    align-items: center;
    justify-content: center;
    gap: 8px;
    font-size: 12px;
    line-height: 20px;
}

.key {
    width: 14px;
    height: 1px;
}

.key.bad {
    background-color: #c0341c;
}

.tools {
    display: flex;
    align-items: center;
    gap: 11px;
    justify-content: flex-end;
    margin-top: 38px;
}

.search {
    display: flex;
    align-items: center;
    gap: 4px;
    width: 230px;
    height: 31px;
    padding-left: 8px;
    border-radius: 4px;
    background-color: #4a4a4a;
    color: #b0b0b0;
}

.search svg {
    width: 20px;
    height: 20px;
}

.search input {
    flex: 1;
    min-width: 0;
    padding-bottom: 1px;
    outline: none;
}

.search input::placeholder {
    color: #a0a0a0;
}

.divider {
    width: 1px;
    height: 24px;
    background-color: #474747;
}

.density {
    width: 81px;
    height: 32px;
}

.density button {
    flex: 1;
}

.density svg {
    width: 12px;
    height: 12px;
}

/* Asset table */
.grid-area {
    position: relative;
    flex: 1;
    min-height: 0;
    margin-top: 19px;
}

.grid-scroll {
    height: 100%;
    padding-right: 16px;
    overflow: hidden;
    background-color: #1b1b1b;
}

.assets {
    width: 100%;
    table-layout: fixed;
    border-spacing: 0;
    text-align: right;
}

.c-asset { width: 187px; }
.c-status { width: 179px; }
.c-avail { width: 152px; }
.c-outlier { width: 164px; }
.c-range { width: 163px; }
.c-stale { width: 152px; }
.c-time { width: 189px; }
.c-action { width: 52px; }

.assets th,
.row td {
    padding: 0 15px;
    background-color: #262626;
    white-space: nowrap;
}

.assets th {
    height: 43px;
    font-weight: 700;
}

.row td {
    height: 54px;
    padding-bottom: 1px;
    border-top: 1px solid #3d3d3d;
}

.row .na {
    padding-right: 14px;
    color: #5c5c5c;
}

.assets .left {
    padding-left: 16px;
    text-align: left;
}

.assets .status {
    padding-right: 38px;
}

.assets .line {
    border-left: 1px solid #474747;
}

.assets .sorted {
    background-color: #303030;
}

.sorted svg {
    width: 12px;
    height: 14px;
    margin-right: 4px;
    vertical-align: -3px;
}

/* fill the scrollbar gutter */
.assets th:last-child,
.row:not(.open) td:last-child {
    box-shadow: 16px 0 0 #262626;
}

.asset-name {
    color: #f2f2f2;
    font-weight: 700;
    line-height: 18px;
}

.asset-id {
    color: #8c8c8c;
    font-size: 12px;
    line-height: 18px;
}

.row:last-child td {
    vertical-align: top;
    padding-top: 9px;
}

.row:last-child .badge {
    margin-top: 6px;
}

.badge {
    display: inline-block;
    padding: 0 6px;
    border: 1px solid #f2a99e;
    border-radius: 4px;
    background-color: #ffe3df;
    color: #e62e17;
    line-height: 21px;
}

.row .action {
    padding: 0 0 0 20px;
    text-align: left;
}

.open .action {
    background-color: #333;
}

.action button {
    display: flex;
    align-items: center;
    width: 20px;
    height: 20px;
    color: #fff;
}

.action svg {
    width: 18px;
    height: 16px;
}

.detail td {
    padding: 14px 7px 14px 16px;
    border-top: 1px solid #3d3d3d;
    background-color: #1a1a1a;
    text-align: left;
}

.detail-body {
    display: grid;
    grid-template-columns: 248px 1fr;
    gap: 7px;
    height: 383px;
}

.streams {
    display: flex;
    flex-direction: column;
    min-height: 0;
    padding-bottom: 8px;
    border: 1px solid #2e2e2e;
    border-radius: 4px;
}

.streams h4 {
    padding-left: 12px;
    border-bottom: 1px solid #2e2e2e;
    color: #999;
    font-size: 12px;
    font-weight: 400;
    letter-spacing: 1px;
    line-height: 39px;
    text-transform: uppercase;
}

.stream-list {
    display: flex;
    flex-direction: column;
    gap: 4px;
    min-height: 0;
    margin: 12px 8px 0;
    overflow: hidden;
}

.stream {
    position: relative;
    display: flex;
    align-items: center;
    flex: none;
    gap: 16px;
    min-height: 63px;
    padding: 16px 8px 17px 24px;
    border-radius: 4px;
    background-color: #262626;
    font-weight: 700;
    line-height: 19px;
}

.stream.checked {
    background-color: #404040;
}

.stream input {
    flex: none;
    width: 14px;
    height: 14px;
    border: 2px solid #e6e6e6;
    border-radius: 50%;
    appearance: none;
}

.stream input:checked {
    border-color: #fff;
    background: radial-gradient(circle, #fff 0 3px, transparent 4px);
}

.dot {
    position: absolute;
    top: calc(50% - 3px);
    right: 11px;
    width: 8px;
    height: 8px;
    border-radius: 50%;
    background-color: #e01a00;
}

.view-tabs {
    display: flex;
    gap: 10px;
}

.view-tabs button {
    height: 31px;
    padding: 0 12px;
    border-radius: 4px;
    color: #a6a6a6;
    font-weight: 700;
}

.view-tabs .on {
    background-color: #595959;
    color: #f2f2f2;
}

.chart-tools {
    display: flex;
    align-items: center;
    gap: 12px;
    justify-content: flex-end;
    margin-top: 11px;
    padding-right: 5px;
}

.modes {
    width: 115px;
    height: 31px;
    border-color: #3d3d3d;
}

.modes button {
    flex: 1;
    border: none;
}

.modes .on {
    background-color: #404040;
}

.modes svg {
    width: 16px;
    height: 12px;
}

.zooms {
    display: flex;
    gap: 4px;
}

.zooms button {
    display: flex;
    align-items: center;
    justify-content: center;
    width: 31px;
    height: 31px;
    border-radius: 4px;
}

.zooms button:disabled {
    background-color: #333;
    color: #595959;
}

.zooms svg {
    width: 18px;
    height: 18px;
}

.tool-link svg {
    width: 16px;
    height: 16px;
}

.tool-link {
    display: flex;
    align-items: center;
    gap: 7px;
    margin-left: 12px;
    color: #fff;
    font-weight: 700;
}

.tool-link + .tool-link {
    margin-left: 17px;
}

.stream-chart {
    position: relative;
    margin: 19px 0 36px 29px;
}

.plot-stream {
    width: 100%;
    height: 227px;
}

.plot-stream .grid rect,
.plot-stream .grid line {
    stroke: #303030;
}

.plot-stream .x-labels,
.unit {
    fill: #a6a6a6;
}

.chart-value {
    position: absolute;
    top: 7px;
    right: 8px;
    width: 18px;
    border-radius: 4px;
    background-color: #3a3a3a;
    box-shadow: 0 2px 6px rgba(0, 0, 0, 0.4);
    font-size: 10px;
    line-height: 29px;
    text-align: center;
}

.stream-key {
    background-color: #2f8ac4;
}

.spotlight {
    position: absolute;
    top: 34px;
    right: 2px;
    left: -4px;
    z-index: 10;
    height: 469px;
    border: 8px solid #005bd3;
    box-shadow: 0 0 0 4000px rgba(255, 255, 255, 0.68);
    pointer-events: none;
}

/* Pager */
.pager {
    display: flex;
    align-items: center;
    gap: 7px;
    flex: none;
    height: 70px;
    padding-bottom: 8px;
    color: #a6a6a6;
}

.page-size {
    width: 106px;
    color: #e6e6e6;
}

.summary {
    margin-left: auto;
    font-size: 13px;
}

.pages {
    display: flex;
    margin-left: 6px;
    color: #fff;
}

.pages button {
    display: flex;
    align-items: center;
    justify-content: center;
    width: 31px;
    height: 31px;
}

.pages button:last-child {
    width: 29px;
}

.pages button:disabled {
    color: #8c8c8c;
}

.pages .current {
    font-weight: 700;
}

.pages svg {
    width: 14px;
    height: 14px;
}

.arrow {
    position: absolute;
    top: 708px;
    left: 88px;
    z-index: 11;
    width: 160px;
    height: 162px;
    color: #005bd3;
    pointer-events: none;
}
```
